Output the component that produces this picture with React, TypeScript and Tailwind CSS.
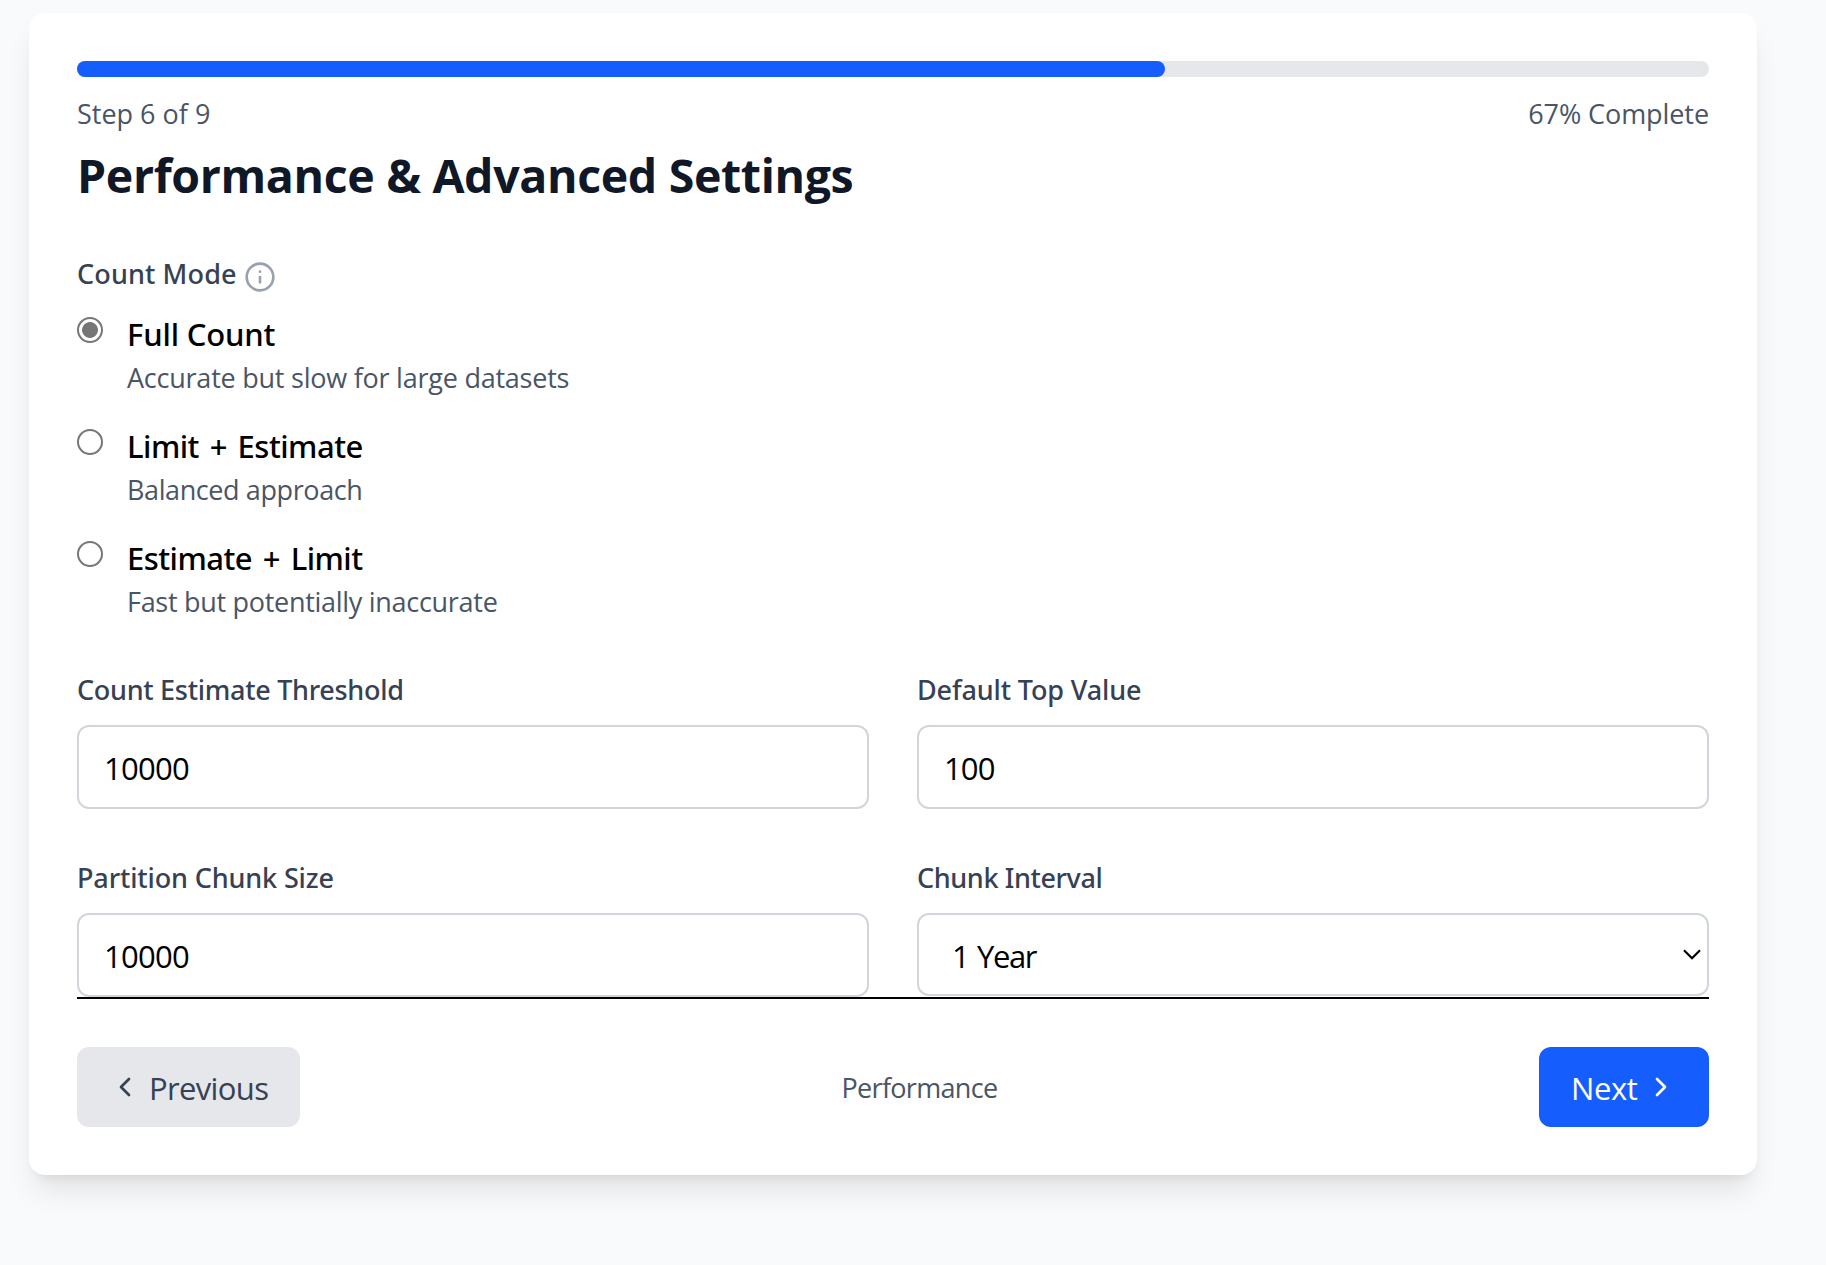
import { useState } from "react";
import { ChevronLeft, ChevronRight, Info } from "lucide-react";

const STEP = 6;
const TOTAL_STEPS = 9;

const countModes = [
  {
    id: "full",
    title: "Full Count",
    description: "Accurate but slow for large datasets",
    titleTracking: "tracking-[-0.178px]",
    descriptionTracking: "tracking-[-0.235px]",
  },
  {
    id: "limit-estimate",
    title: "Limit + Estimate",
    description: "Balanced approach",
    titleTracking: "tracking-[-0.52px] [word-spacing:3.2px]",
    descriptionTracking: "tracking-[-0.4px]",
  },
  {
    id: "estimate-limit",
    title: "Estimate + Limit",
    description: "Fast but potentially inaccurate",
    titleTracking: "tracking-[-0.54px] [word-spacing:3.2px]",
    descriptionTracking: "tracking-[-0.29px]",
  },
];

const labelClass =
  "-mb-1 block font-['Noto_Sans',sans-serif] text-[27px] leading-[44px] font-medium text-gray-700";
const controlClass =
  "h-[84px] w-full rounded-xl border-2 border-gray-300 bg-white text-[31px] text-black outline-none";

function NumberField({
  id,
  label,
  tracking,
  valueTracking,
  initial,
}: {
  id: string;
  label: string;
  tracking: string;
  valueTracking: string;
  initial: string;
}) {
  const [value, setValue] = useState(initial);
  return (
    <div>
      <label htmlFor={id} className={`${labelClass} ${tracking}`}>
        {label}
      </label>
      <input
        id={id}
        type="text"
        inputMode="numeric"
        value={value}
        onChange={(e) => setValue(e.target.value)}
        className={`${controlClass} ${valueTracking} mt-[17px] block px-[25px] pt-0.5`}
      />
    </div>
  );
}

export default function App() {
  const [mode, setMode] = useState("full");
  const percent = (STEP / TOTAL_STEPS) * 100;

  return (
    <div className="min-h-[1265px] bg-gray-50 pt-[13px] pl-[29px] font-['Open_Sans',sans-serif]">
      <div className="w-[1728px] rounded-2xl bg-white p-12 shadow-[0_20px_30px_-6px_rgb(0_0_0/0.1),0_8px_12px_-8px_rgb(0_0_0/0.1)]">
        <div className="h-4 rounded-full bg-gray-200">
          <div className="h-4 rounded-full bg-[#155dfc]" style={{ width: `${percent}%` }} />
        </div>
        <div className="mt-4 -mb-0.5 flex justify-between text-[27px] leading-[42px] text-gray-600">
          <span>Step 6 of 9</span>
          <span className="tracking-[-0.08px]">67% Complete</span>
        </div>
        <h2 className="mt-2 -mb-1 text-[46.5px] leading-[68px] font-bold tracking-[-0.36px] text-gray-900">
          Performance &amp; Advanced Settings
        </h2>

        <div className="mt-[47px] flex h-10 items-start gap-[7px]">
          <span className={`${labelClass} tracking-[0.124px]`}>Count Mode</span>
          <Info className="mt-[9px] size-8 text-gray-400" />
        </div>

        <div className="mt-[17px] flex flex-col gap-6">
          {countModes.map((option) => (
            <label key={option.id} className="flex h-[88px] items-start gap-6">
              <input
                type="radio"
                name="count-mode"
                checked={mode === option.id}
                onChange={() => setMode(option.id)}
                className="mt-[8px] size-[26px] shrink-0 appearance-none rounded-full border-2 border-[#767676] bg-white checked:border-[#767676] checked:bg-[radial-gradient(circle,#767676_7.5px,transparent_8.3px)]"
              />
              <span className="block">
                <span
                  className={`-mb-0.5 block font-['Noto_Sans',sans-serif] text-[31px] leading-[50px] font-medium text-black ${option.titleTracking}`}
                >
                  {option.title}
                </span>
                <span
                  className={`block text-[27px] leading-[42px] text-gray-600 ${option.descriptionTracking}`}
                >
                  {option.description}
                </span>
              </span>
            </label>
          ))}
        </div>

        <div className="mt-[47px] grid grid-cols-2 gap-x-12 gap-y-[47px]">
          <NumberField
            id="threshold"
            label="Count Estimate Threshold"
            tracking="tracking-[-0.29px]"
            valueTracking="tracking-[-0.725px]"
            initial="10000"
          />
          <NumberField
            id="top"
            label="Default Top Value"
            tracking="tracking-[-0.135px]"
            valueTracking="tracking-[-0.9px]"
            initial="100"
          />
          <NumberField
            id="chunk-size"
            label="Partition Chunk Size"
            tracking="tracking-[-0.137px]"
            valueTracking="tracking-[-0.725px]"
            initial="10000"
          />
          <div>
            <label htmlFor="interval" className={`${labelClass} tracking-[-0.38px]`}>
              Chunk Interval
            </label>
            <div className="relative mt-[17px]">
              <select
                id="interval"
                defaultValue="1y"
                className="block h-[83px] w-full appearance-none rounded-xl border-2 border-gray-300 bg-white pt-[3px] pl-[33px] text-[31px] tracking-[-1.4px] [word-spacing:2px] text-black outline-none"
              >
                <option value="1y">1 Year</option>
              </select>
              <svg
                viewBox="0 0 18 11"
                className="pointer-events-none absolute top-[36px] right-[8px] h-[11px] w-[18px]"
                fill="none"
                stroke="black"
                strokeWidth="2.2"
              >
                <path d="M1 1.3 L9 9.3 L17 1.3" />
              </svg>
            </div>
          </div>
        </div>

        <div className="border-t-2 border-black" />
        <div className="mt-12 flex items-center justify-between">
          <button className="flex h-20 w-[223px] items-center gap-2 rounded-xl bg-gray-200 pl-8 text-[31px] tracking-[-0.65px] text-gray-700">
            <ChevronLeft className="size-8 shrink-0" />
            <span className="pt-[3px]">Previous</span>
          </button>
          <span className="pt-px text-[27px] leading-[40px] tracking-[-0.679px] text-gray-600">
            Performance
          </span>
          <button className="flex h-20 w-[170px] items-center gap-2 rounded-xl bg-[#155dfc] pl-8 text-[31px] tracking-[-0.4px] text-white">
            <span className="pt-[3px]">Next</span>
            <ChevronRight className="size-8 shrink-0" />
          </button>
        </div>
      </div>
    </div>
  );
}
